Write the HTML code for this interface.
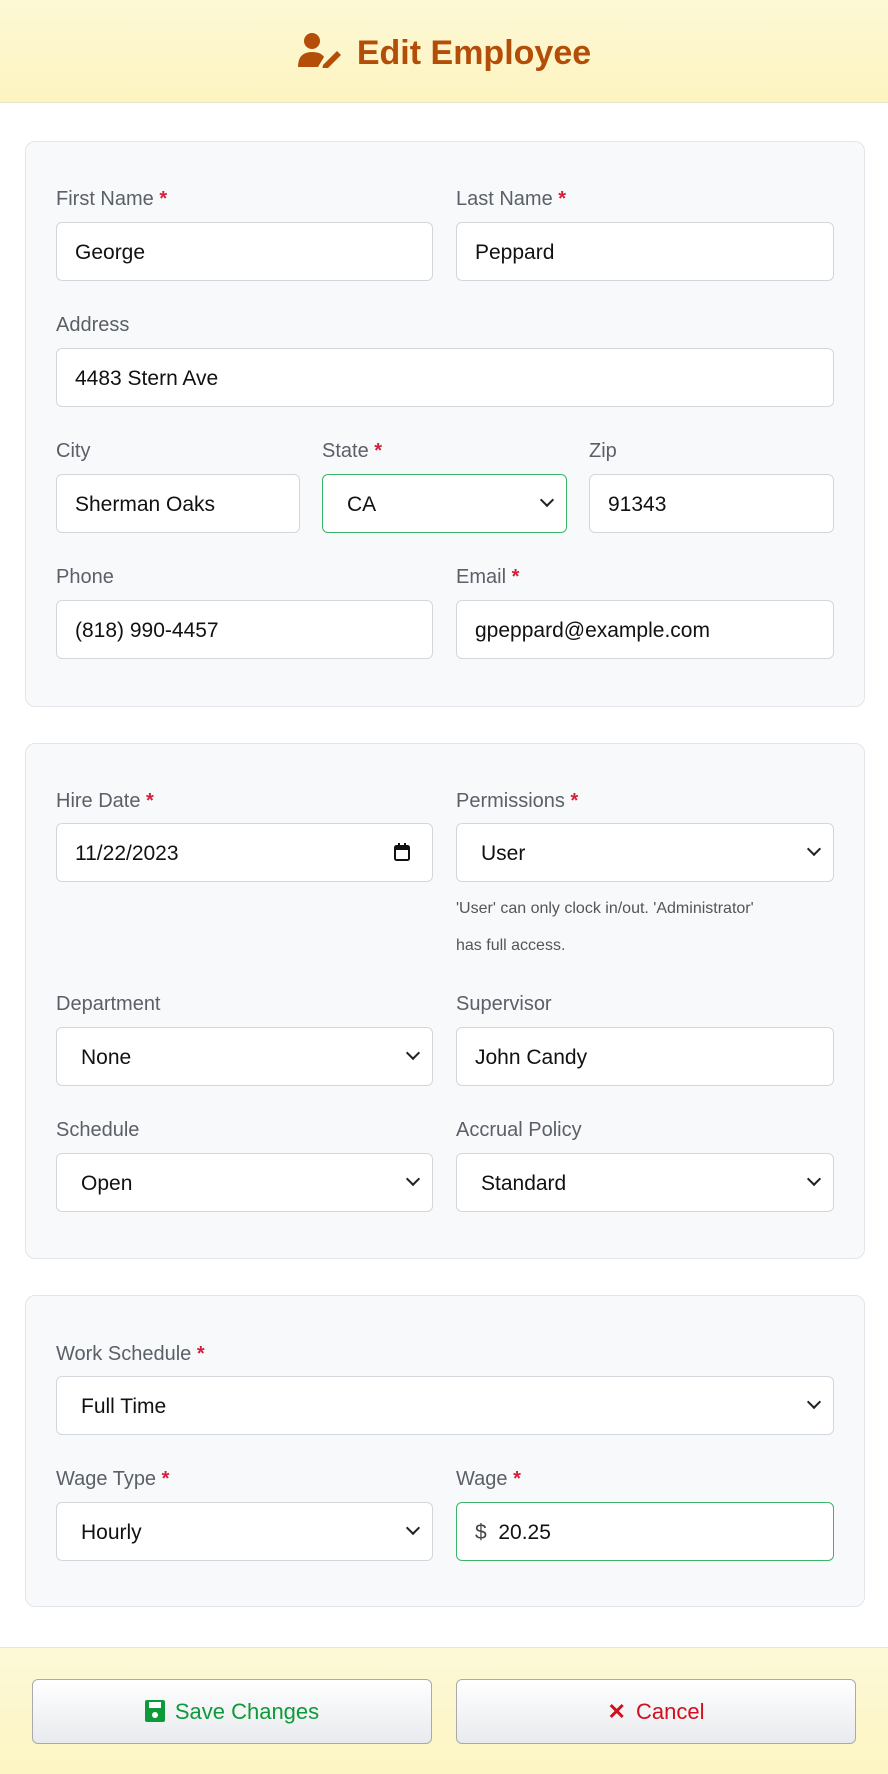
<!DOCTYPE html>
<html><head><meta charset="utf-8"><style>
*{box-sizing:border-box;margin:0;padding:0}
body{width:888px;height:1774px;position:relative;background:#fff;font-family:"Liberation Sans",sans-serif;overflow:hidden}
.hdr{position:absolute;left:0;top:0;width:888px;height:103px;background:linear-gradient(#fdf8d6,#fdf4c0);border-bottom:1px solid #e8e4cc}
.hdr .t{position:absolute;left:0;width:888px;top:32px;text-align:center;font-size:34px;font-weight:bold;color:#b34d07}
.card{position:absolute;left:25px;width:840px;background:#f8f9fb;border:1px solid #e2e5e9;border-radius:10px}
.lbl{position:absolute;font-size:20px;color:#5b6068;margin-top:2px}
.lbl b{color:#d21f3c;font-weight:bold}
.in{position:absolute;height:59px;background:#fff;border:1px solid #d3d7dc;border-radius:6px;font-size:21px;color:#111;line-height:59px;padding-left:18px}
.sel{padding-left:24px}
.sel:after{content:"";position:absolute;right:14px;top:20px;width:8px;height:8px;border-right:2.5px solid #222;border-bottom:2.5px solid #222;transform:rotate(45deg)}
.green{border-color:#3bb56a}
.help{position:absolute;font-size:16px;color:#555;line-height:37px}
.ftr{position:absolute;left:0;top:1647px;width:888px;height:127px;background:linear-gradient(#fdf8d8,#fdf5c2);border-top:1px solid #e8e6d6}
.btn{position:absolute;top:31px;height:65px;width:400px;border:1px solid #aaa;border-radius:6px;background:linear-gradient(#fff,#e9eaee);text-align:center;line-height:63px;font-size:22px}
</style></head><body>
<div class="hdr"><div class="t"><svg width="46" height="36" viewBox="0 0 46 36" style="vertical-align:-4px;margin-right:14px"><circle cx="15" cy="9" r="8" fill="#b34d07"/><path d="M1 35 Q1 20 15 20 Q24 20 27 25 L21 35Z" fill="#b34d07"/><path d="M26 33 L40 19 L44 23 L30 37 L25 38Z" fill="#b34d07"/></svg>Edit Employee</div></div>

<div class="card" style="top:141px;height:566px"></div>
<div class="lbl" style="left:56px;top:186px">First Name <b>*</b></div>
<div class="lbl" style="left:456px;top:186px">Last Name <b>*</b></div>
<div class="in" style="left:56px;top:222px;width:377px">George</div>
<div class="in" style="left:456px;top:222px;width:378px">Peppard</div>
<div class="lbl" style="left:56px;top:312px">Address</div>
<div class="in" style="left:56px;top:348px;width:778px">4483 Stern Ave</div>
<div class="lbl" style="left:56px;top:438px">City</div>
<div class="lbl" style="left:322px;top:438px">State <b>*</b></div>
<div class="lbl" style="left:589px;top:438px">Zip</div>
<div class="in" style="left:56px;top:474px;width:244px">Sherman Oaks</div>
<div class="in sel green" style="left:322px;top:474px;width:245px">CA</div>
<div class="in" style="left:589px;top:474px;width:245px">91343</div>
<div class="lbl" style="left:56px;top:564px">Phone</div>
<div class="lbl" style="left:456px;top:564px">Email <b>*</b></div>
<div class="in" style="left:56px;top:600px;width:377px">(818) 990-4457</div>
<div class="in" style="left:456px;top:600px;width:378px">gpeppard@example.com</div>

<div class="card" style="top:743px;height:516px"></div>
<div class="lbl" style="left:56px;top:788px">Hire Date <b>*</b></div>
<div class="lbl" style="left:456px;top:788px">Permissions <b>*</b></div>
<div class="in" style="left:56px;top:823px;width:377px">11/22/2023<svg style="position:absolute;right:22px;top:19px" width="16" height="18" viewBox="0 0 16 18"><rect x="1" y="3" width="14" height="14" rx="1.5" fill="none" stroke="#111" stroke-width="2"/><rect x="1" y="3" width="14" height="4" fill="#111"/><rect x="4" y="0" width="2" height="4" fill="#111"/><rect x="10" y="0" width="2" height="4" fill="#111"/></svg></div>
<div class="in sel" style="left:456px;top:823px;width:378px">User</div>
<div class="help" style="left:456px;top:890px">'User' can only clock in/out. 'Administrator'<br>has full access.</div>
<div class="lbl" style="left:56px;top:991px">Department</div>
<div class="lbl" style="left:456px;top:991px">Supervisor</div>
<div class="in sel" style="left:56px;top:1027px;width:377px">None</div>
<div class="in" style="left:456px;top:1027px;width:378px">John Candy</div>
<div class="lbl" style="left:56px;top:1117px">Schedule</div>
<div class="lbl" style="left:456px;top:1117px">Accrual Policy</div>
<div class="in sel" style="left:56px;top:1153px;width:377px">Open</div>
<div class="in sel" style="left:456px;top:1153px;width:378px">Standard</div>

<div class="card" style="top:1295px;height:312px"></div>
<div class="lbl" style="left:56px;top:1341px">Work Schedule <b>*</b></div>
<div class="in sel" style="left:56px;top:1376px;width:778px">Full Time</div>
<div class="lbl" style="left:56px;top:1466px">Wage Type <b>*</b></div>
<div class="lbl" style="left:456px;top:1466px">Wage <b>*</b></div>
<div class="in sel" style="left:56px;top:1502px;width:377px">Hourly</div>
<div class="in green" style="left:456px;top:1502px;width:378px"><span style="color:#444">$</span>&nbsp;&nbsp;20.25</div>

<div class="ftr">
<div class="btn" style="left:32px;color:#0e9a3a"><svg width="20" height="22" viewBox="0 0 20 22" style="vertical-align:-3px;margin-right:10px"><rect x="0" y="0" width="20" height="22" rx="2" fill="#0e9a3a"/><rect x="4" y="2" width="12" height="6" fill="#fff"/><circle cx="10" cy="15" r="3" fill="#fff"/></svg>Save Changes</div>
<div class="btn" style="left:456px;color:#d0101c"><span style="font-weight:bold;margin-right:10px">✕</span>Cancel</div>
</div>
</body></html>
